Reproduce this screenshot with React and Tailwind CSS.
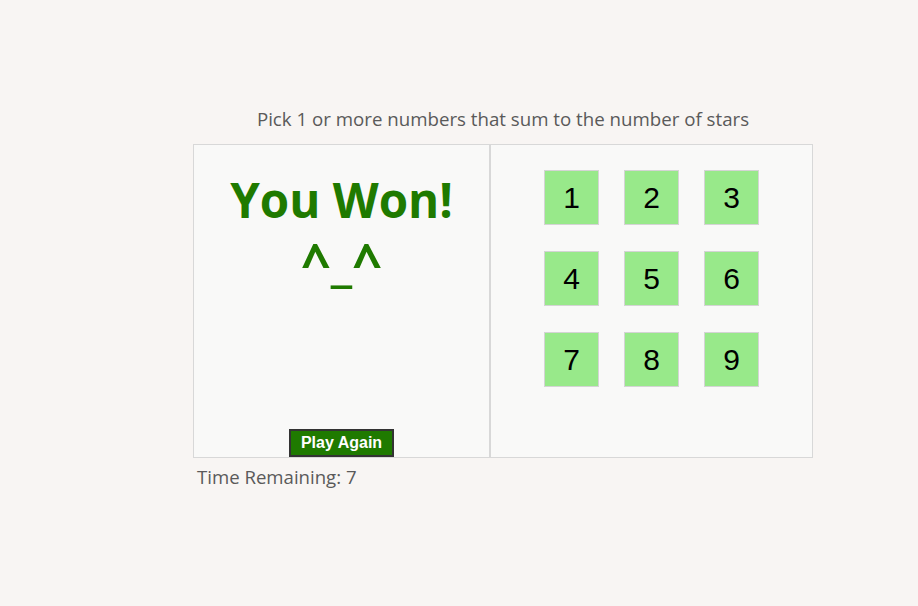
import React from "react";

const numbers = [1, 2, 3, 4, 5, 6, 7, 8, 9];

const App = () => {
  return (
    <div className="min-h-[606px] w-full bg-[#f8f5f3] pt-[107px] font-['Open_Sans',sans-serif] text-[#5a5a5a]">
      <div className="ml-[193px] w-[620px]">
        <p className="text-center text-[18.7px] leading-[24px]">
          Pick 1 or more numbers that sum to the number of stars
        </p>
        <div className="mt-[13px] flex h-[314px] border border-[#d8d8d8] bg-[#f9f9f8]">
          <div className="flex w-[297px] flex-col items-center border-r-2 border-[#d8d8d8]">
            <h1 className="mt-[25px] text-[47.5px] font-bold leading-[60px] text-[#1f7a00]">
              You Won!
            </h1>
            <p className="mt-[2px] text-[52px] font-bold leading-[58px] text-[#1f7a00]">
              ^_^
            </p>
            <button className="mt-auto h-[28px] w-[105px] border-2 border-[#333] bg-[#1f7a00] font-['Liberation_Sans',sans-serif] text-[16px] font-bold text-white">
              Play Again
            </button>
          </div>
          <div className="flex-1">
            <div className="mt-[25px] ml-[53px] grid w-[215px] grid-cols-3 gap-x-[25px] gap-y-[26px]">
              {numbers.map((n) => (
                <div
                  key={n}
                  className="flex h-[55px] w-[55px] items-center justify-center border border-[#d4d4d4] bg-[#98e98a] font-['Liberation_Sans',sans-serif] text-[30px] text-black"
                >
                  {n}
                </div>
              ))}
            </div>
          </div>
        </div>
        <p className="mt-[6px] ml-[4px] text-[18.6px] leading-[26px]">Time Remaining: 7</p>
      </div>
    </div>
  );
};

export default App;
